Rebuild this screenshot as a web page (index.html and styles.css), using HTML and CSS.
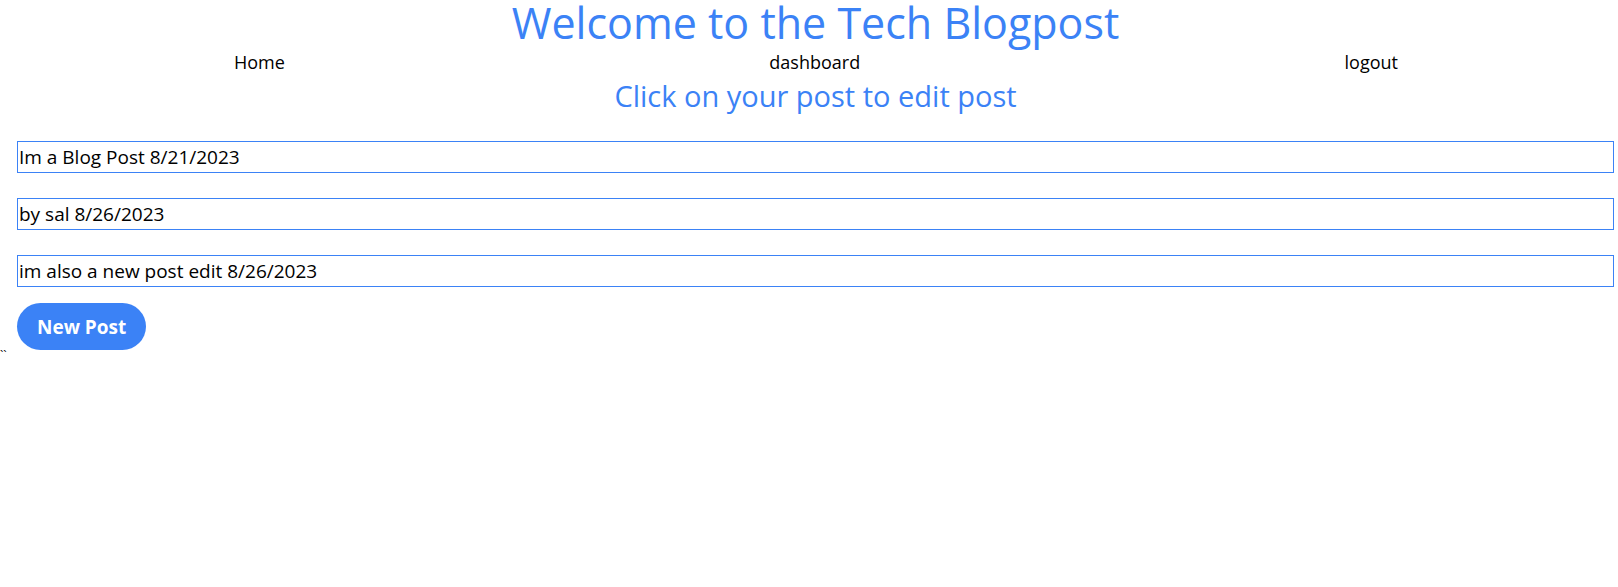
FILE: index.html
```html
<!DOCTYPE html>
<html lang="en">
<head>
<meta charset="utf-8">
<title>Tech Blogpost</title>
<link rel="stylesheet" href="styles.css">
</head>
<body>
<div class="page">
  <header class="header">
    <h1 class="title">Welcome to the Tech Blogpost</h1>
    <nav class="nav">
      <a class="nav-link" href="#">Home</a>
      <a class="nav-link" href="#">dashboard</a>
      <a class="nav-link" href="#">logout</a>
    </nav>
  </header>
  <main class="dashboard">
    <h2 class="subtitle">Click on your post to edit post</h2>
    <div class="posts">
      <div class="post">Im a Blog Post 8/21/2023</div>
      <div class="post">by sal 8/26/2023</div>
      <div class="post">im also a new post edit 8/26/2023</div>
    </div>
    <button class="new-post" type="button">New Post</button>
  </main>
</div>
<div class="stray">``</div>
</body>
</html>
```
FILE: styles.css
```css
html, body {
  margin: 0;
  padding: 0;
  background: #ffffff;
}

body {
  font-family: "Open Sans", "Noto Sans", sans-serif;
  color: #000000;
}

.page {
  margin: 0 4px 0 17px;
}

.header {
  display: flex;
  flex-direction: column;
}

.title {
  margin: 0;
  font-size: 43px;
  font-weight: 400;
  line-height: 46px;
  color: #3b82f6;
  text-align: center;
}

.nav {
  display: flex;
  justify-content: space-between;
  margin-top: 2px;
  padding: 0 216px 0 217px;
}

.nav-link {
  font-size: 18px;
  line-height: 28px;
  color: #000000;
  text-decoration: none;
}

.dashboard {
  display: flex;
  flex-direction: column;
  align-items: flex-start;
}

.subtitle {
  align-self: stretch;
  margin: 2px 0 0;
  font-size: 29px;
  font-weight: 400;
  line-height: 36px;
  color: #3b82f6;
  text-align: center;
}

.posts {
  align-self: stretch;
  display: flex;
  flex-direction: column;
  gap: 25px;
  margin-top: 27px;
}

.post {
  border: 1px solid #3b82f6;
  font-size: 19px;
  line-height: 30px;
  padding-left: 1px;
  color: #000000;
}

.new-post {
  margin-top: 16px;
  height: 47px;
  padding: 0 20px;
  border: none;
  border-radius: 9999px;
  background: #3b82f6;
  color: #ffffff;
  font-family: "Open Sans", "Noto Sans", sans-serif;
  font-size: 19px;
  font-weight: 700;
}

.stray {
  font-size: 12px;
  line-height: 6px;
  height: 6px;
  margin-top: 3px;
  color: #000000;
}
```
